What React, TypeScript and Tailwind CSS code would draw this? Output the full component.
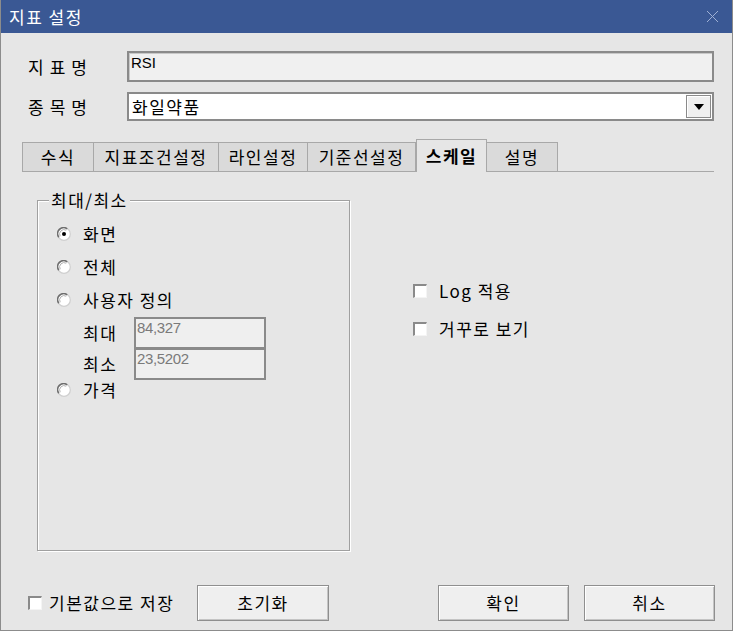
import React from "react";

const tabs = [
  { label: "수식", w: "w-[72px]" },
  { label: "지표조건설정", w: "w-[126px]" },
  { label: "라인설정", w: "w-[90px]" },
  { label: "기준선설정", w: "w-[109px]" },
  { label: "스케일", w: "w-[71px]", active: true },
  { label: "설명", w: "w-[72px]" },
];

function Radio({ checked = false }: { checked?: boolean }) {
  return (
    <svg width="14" height="14" viewBox="0 0 14 14" className="shrink-0">
      <circle cx="7" cy="7" r="6.3" fill="#ffffff" stroke="#cfcfcf" strokeWidth="1.2" />
      <path d="M1.8 10.2 A6 6 0 0 1 10.2 1.8" fill="none" stroke="#6e6e6e" strokeWidth="1.6" />
      <path d="M3.2 9.2 A4.4 4.4 0 0 1 9.2 3.2" fill="none" stroke="#b0b0b0" strokeWidth="1" />
      {checked && <circle cx="7" cy="7" r="2" fill="#000" />}
    </svg>
  );
}

function Check() {
  return (
    <span className="block w-[14px] h-[14px] shrink-0 bg-white border-t-2 border-l-2 border-t-[#8a8a8a] border-l-[#8a8a8a] border-b border-r border-b-[#f4f4f4] border-r-[#f4f4f4]" />
  );
}

function Button({ children, w }: { children: React.ReactNode; w: string }) {
  return (
    <button
      className={`${w} h-[36px] bg-[#efefef] border border-[#8f8f8f] shadow-[inset_1px_1px_0_#ffffff,inset_-1px_-1px_0_#c4c4c4] text-[17px] tracking-[1.5px] text-black`}
    >
      {children}
    </button>
  );
}

export default function App() {
  return (
    <div className="w-[733px] h-[631px] bg-[#e6e6e6] border-x border-b border-[#8c8c8c] font-['Noto_Sans_CJK_KR',sans-serif] text-[17px] tracking-[1.5px] text-black overflow-hidden flex flex-col">
      {/* title bar */}
      <div className="h-[33px] shrink-0 -mx-px bg-[#3a5894] flex items-center justify-between pl-[9px] pr-[14px]">
        <span className="text-white text-[17px] leading-none">지표 설정</span>
        <svg width="13" height="13" viewBox="0 0 13 13">
          <path d="M1 1 L12 12 M12 1 L1 12" stroke="#9fb0d4" strokeWidth="1" />
        </svg>
      </div>

      {/* name rows */}
      <div className="flex items-center mt-[18px] ml-[27px]">
        <span className="w-[99px] tracking-[6px]">지표명</span>
        <div className="w-[587px] h-[31px] bg-[#f0f0f0] border-2 border-[#8a8a8a] shadow-[inset_1px_1px_0_#c8c8c8] px-[2px] font-['Liberation_Sans',sans-serif] text-[15px] tracking-normal leading-[20px]">
          RSI
        </div>
      </div>
      <div className="flex items-center mt-[10px] ml-[27px]">
        <span className="w-[99px] tracking-[6px]">종목명</span>
        <div className="w-[587px] h-[29px] bg-white border-2 border-[#8a8a8a] flex items-center justify-between pl-[3px] pr-[1px]">
          <span>화일약품</span>
          <span className="w-[25px] h-[23px] bg-[#efefef] border border-[#8a8a8a] shadow-[inset_1px_1px_0_#ffffff] flex items-center justify-center">
            <svg width="10" height="6" viewBox="0 0 10 6">
              <path d="M0 0 H10 L5 6 Z" fill="#000" />
            </svg>
          </span>
        </div>
      </div>

      {/* tabs */}
      <div className="flex items-end h-[32px] mt-[19px] ml-[21px] mr-[18px] border-b border-[#a8a8a8]">
        {tabs.map((t) =>
          t.active ? (
            <div
              key={t.label}
              className={`${t.w} h-[33px] -mb-px bg-[#e6e6e6] border-x border-t border-[#a8a8a8] flex items-center justify-center font-bold`}
            >
              {t.label}
            </div>
          ) : (
            <div
              key={t.label}
              className={`${t.w} h-[29px] bg-[#dadada] border border-b-0 border-[#a8a8a8] -ml-px first:ml-0 flex items-center justify-center`}
            >
              {t.label}
            </div>
          )
        )}
      </div>

      {/* content */}
      <div className="flex mt-[28px]">
        <div className="relative ml-[36px] w-[313px] h-[351px] border border-[#a0a0a0] shadow-[inset_1px_1px_0_#ffffff,1px_1px_0_#ffffff] pt-[16px]">
          <span className="absolute left-[11px] top-[-11px] bg-[#e6e6e6] px-[2px] leading-[20px]">
            최대/최소
          </span>
          <div className="flex items-center gap-[12px] h-[33px] pl-[19px]">
            <Radio checked />
            <span>화면</span>
          </div>
          <div className="flex items-center gap-[12px] h-[33px] pl-[19px]">
            <Radio />
            <span>전체</span>
          </div>
          <div className="flex items-center gap-[12px] h-[33px] pl-[19px]">
            <Radio />
            <span>사용자 정의</span>
          </div>
          <div className="flex items-center h-[31px] mt-px pl-[45px]">
            <span className="w-[51px]">최대</span>
            <div className="w-[132px] h-[32px] bg-[#efefef] border-2 border-[#8a8a8a] px-[1px] font-['Liberation_Sans',sans-serif] text-[15px] leading-[18px] text-[#7a7a7a] tracking-tight">
              84,327
            </div>
          </div>
          <div className="flex items-center h-[31px] pl-[45px]">
            <span className="w-[51px]">최소</span>
            <div className="w-[132px] h-[32px] bg-[#efefef] border-2 border-[#8a8a8a] px-[1px] font-['Liberation_Sans',sans-serif] text-[15px] leading-[18px] text-[#7a7a7a] tracking-tight">
              23,5202
            </div>
          </div>
          <div className="flex items-center gap-[12px] h-[22px] pl-[19px]">
            <Radio />
            <span>가격</span>
          </div>
        </div>

        <div className="ml-[63px] mt-[83px] flex flex-col gap-[22px]">
          <div className="flex items-center gap-[12px] h-[16px]">
            <Check />
            <span>Log 적용</span>
          </div>
          <div className="flex items-center gap-[12px] h-[16px]">
            <Check />
            <span>거꾸로 보기</span>
          </div>
        </div>
      </div>

      {/* bottom buttons */}
      <div className="flex items-center mt-[34px] ml-[27px]">
        <Check />
        <span className="ml-[7px] w-[138px] whitespace-nowrap">기본값으로 저장</span>
        <span className="ml-[10px]">
          <Button w="w-[132px]">초기화</Button>
        </span>
        <span className="ml-[109px]">
          <Button w="w-[131px]">확인</Button>
        </span>
        <span className="ml-[15px]">
          <Button w="w-[131px]">취소</Button>
        </span>
      </div>
    </div>
  );
}
